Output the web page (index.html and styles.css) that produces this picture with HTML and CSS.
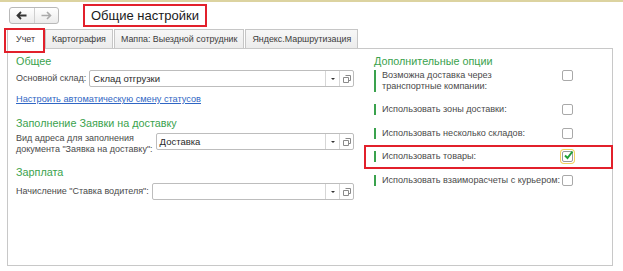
FILE: index.html
```html
<!DOCTYPE html>
<html lang="ru">
<head>
  <meta charset="UTF-8" />
  <title>Общие настройки</title>
  <link rel="stylesheet" href="styles.css">
</head>
<body>

<div class="window">
  <div class="head">
    <div class="nav">
      <span class="nav-btn back">
        <svg width="11" height="9" viewBox="0 0 11 9"><path d="M1.5 4.5H10.5M5 1L1.5 4.5L5 8" fill="none" stroke="#333" stroke-width="1.8"/></svg>
      </span>
      <span class="nav-btn fwd">
        <svg width="11" height="9" viewBox="0 0 11 9"><path d="M0.5 4.5H9.5M6 1L9.5 4.5L6 8" fill="none" stroke="#aaa" stroke-width="1.6"/></svg>
      </span>
    </div>
    <h1 class="title">Общие настройки</h1>
  </div>

  <div class="tabs">
    <div class="tab active">Учет</div>
    <div class="tab">Картография</div>
    <div class="tab">Маппа: Выездной сотрудник</div>
    <div class="tab">Яндекс.Маршрутизация</div>
  </div>

  <div class="panel">
    <div class="col">
      <h2 class="group">Общее</h2>
      <div class="field">
        <span class="label">Основной склад:</span>
        <div class="input">
          <span class="value">Склад отгрузки</span>
          <span class="drop"></span>
          <span class="open"><svg width="8" height="8" viewBox="0 0 8 8"><path d="M2.5 0.5H7.5V5.5H5.5M0.5 2.5H5.5V7.5H0.5Z" fill="none" stroke="#8a8a8a" stroke-width="1"/></svg></span>
        </div>
      </div>
      <a class="link" href="#">Настроить автоматическую смену статусов</a>

      <h2 class="group g2">Заполнение Заявки на доставку</h2>
      <div class="field top">
        <span class="label two">Вид адреса для заполнения<br>документа "Заявка на доставку":</span>
        <div class="input">
          <span class="value">Доставка</span>
          <span class="drop"></span>
          <span class="open"><svg width="8" height="8" viewBox="0 0 8 8"><path d="M2.5 0.5H7.5V5.5H5.5M0.5 2.5H5.5V7.5H0.5Z" fill="none" stroke="#8a8a8a" stroke-width="1"/></svg></span>
        </div>
      </div>

      <h2 class="group g3">Зарплата</h2>
      <div class="field f3">
        <span class="label">Начисление "Ставка водителя":</span>
        <div class="input">
          <span class="value"></span>
          <span class="drop"></span>
          <span class="open"><svg width="8" height="8" viewBox="0 0 8 8"><path d="M2.5 0.5H7.5V5.5H5.5M0.5 2.5H5.5V7.5H0.5Z" fill="none" stroke="#8a8a8a" stroke-width="1"/></svg></span>
        </div>
      </div>
    </div>

    <div class="col options">
      <h2 class="group">Дополнительные опции</h2>
      <div class="opt o1">
        <span class="opt-label">Возможна доставка через<br>транспортные компании:</span>
        <span class="check"></span>
      </div>
      <div class="opt o2">
        <span class="opt-label">Использовать зоны доставки:</span>
        <span class="check"></span>
      </div>
      <div class="opt o3">
        <span class="opt-label">Использовать несколько складов:</span>
        <span class="check"></span>
      </div>
      <div class="opt o4 marked">
        <span class="opt-label">Использовать товары:</span>
        <span class="check on"><svg width="11" height="11" viewBox="0 0 11 11"><path d="M2 5.5L4.5 8L9.5 1.5" fill="none" stroke="#21a038" stroke-width="2"/></svg></span>
      </div>
      <div class="opt o5">
        <span class="opt-label">Использовать взаиморасчеты с курьером:</span>
        <span class="check"></span>
      </div>
    </div>
  </div>
</div>

</body>
</html>
```

FILE: styles.css
```css
* { box-sizing: border-box; }
body {
  margin: 0;
  font-family: "Liberation Sans", Arial, sans-serif;
  background-color: #fff;
  color: #4a4a4a;
}
.window {
  border-top: 2px solid #dcd3a0;
  height: 271px;
}
.head {
  display: flex;
  align-items: center;
  height: 26px;
  padding-left: 9px;
}
.nav {
  display: flex;
  width: 50px;
  height: 17px;
  border: 1px solid #b9b9b9;
  border-radius: 3px;
  background: linear-gradient(#ffffff, #ebebeb);
}
.nav-btn {
  flex: 1;
  display: flex;
  align-items: center;
  justify-content: center;
}
.nav-btn.back {
  border-right: 1px solid #cfcfcf;
}
.title {
  margin: 0 0 0 24px;
  height: 23px;
  padding: 0 6px;
  border: 2px solid #e2202b;
  font-size: 13px;
  font-weight: normal;
  line-height: 19px;
  color: #1a1a1a;
}
.tabs {
  display: flex;
  gap: 1px;
  margin: 1px 0 0 7px;
  height: 19px;
}
.tab {
  height: 19px;
  padding: 0 6px;
  border: 1px solid #c6c6c6;
  border-bottom: none;
  background: linear-gradient(#f7f7f7, #ececec);
  font-size: 8.9px;
  line-height: 18px;
  color: #3c3c3c;
  white-space: nowrap;
}
.tab.active {
  position: relative;
  z-index: 1;
  height: 20px;
  width: 37px;
  text-align: center;
  background: #fff;
}
.tab.active::after {
  content: "";
  position: absolute;
  left: -4px;
  right: -2px;
  top: -2px;
  bottom: -4px;
  border: 2px solid #e2202b;
}
.panel {
  display: grid;
  grid-template-columns: 338px 1fr;
  column-gap: 20px;
  width: 606px;
  height: 218px;
  margin-left: 7px;
  padding: 5px 8px 0 8px;
  border: 1px solid #c8c8c8;
}
.group {
  margin: 0;
  font-size: 10.8px;
  font-weight: normal;
  line-height: 14px;
  color: #3aa24d;
}
.g2 { margin-top: 11px; }
.g3 { margin-top: 10px; }
.field {
  display: flex;
  align-items: center;
  gap: 3px;
  margin-top: 2px;
}
.field.top {
  align-items: flex-start;
  margin-top: 3px;
}
.field.f3 { margin-top: 4px; }
.label {
  font-size: 9px;
  line-height: 11px;
  white-space: nowrap;
}
.input {
  flex: 1;
  display: flex;
  height: 17px;
  border: 1px solid #bdbdbd;
  border-radius: 2px;
  background: #fff;
}
.value {
  flex: 1;
  padding-left: 3px;
  font-size: 9.5px;
  line-height: 15px;
  color: #2a2a2a;
}
.drop, .open {
  width: 14px;
  display: flex;
  align-items: center;
  justify-content: center;
  border-left: 1px solid #d6d6d6;
}
.drop::before {
  content: "";
  border-left: 2px solid transparent;
  border-right: 2px solid transparent;
  border-top: 2px solid #333;
}
.link {
  display: block;
  margin-top: 6px;
  font-size: 9.2px;
  line-height: 12px;
  color: #2f66c4;
}
.opt {
  display: flex;
  align-items: flex-start;
}
.o1 { margin-top: 2px; }
.o2 { margin-top: 12px; }
.o3, .o5 { margin-top: 13px; }
.o4 { margin-top: 12px; }
.opt-label {
  flex-shrink: 0;
  width: 188px;
  padding-left: 6px;
  border-left: 2px solid #3aa24d;
  font-size: 9.1px;
  line-height: 11px;
  white-space: nowrap;
}
.check {
  flex-shrink: 0;
  width: 11px;
  height: 11px;
  border: 1px solid #a9a9a9;
  border-radius: 2px;
  background: #fff;
}
.check.on {
  position: relative;
  border-color: #9a9a9a;
  box-shadow: 0 0 0 1px #fff, 0 0 0 2px #f0d060;
}
.check.on svg {
  position: absolute;
  left: 0;
  top: -2px;
}
.marked {
  position: relative;
}
.marked::after {
  content: "";
  position: absolute;
  left: -10px;
  right: -9px;
  top: -6px;
  bottom: -7px;
  border: 2px solid #e2202b;
}
```
